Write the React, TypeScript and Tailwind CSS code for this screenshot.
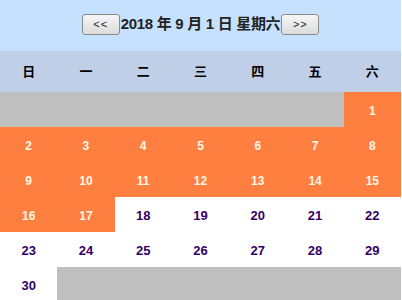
import React from 'react';

const weekdays = ['日', '一', '二', '三', '四', '五', '六'];

// September 2018 starts on Saturday; days up to the 17th are marked
const cells: (number | null)[] = [
  ...Array(6).fill(null),
  ...Array.from({ length: 30 }, (_, i) => i + 1),
  ...Array(6).fill(null),
];

const Btn: React.FC<{ label: string }> = ({ label }) => (
  <button className="h-[21px] w-[38px] rounded-[3px] border border-[#8a8a8a] bg-gradient-to-b from-[#f6f6f6] to-[#dcdcdc] text-[11px] leading-none text-[#222] tracking-[1px] [font-family:'Liberation_Sans',sans-serif]">
    {label}
  </button>
);

const App: React.FC = () => {
  return (
    <div className="w-[402px] h-[300px] overflow-hidden bg-white [font-family:'Liberation_Sans','Noto_Sans_CJK_SC',sans-serif]">
      <div className="w-[401px]">
        <div className="h-[51px] bg-[#c6e1fe] flex items-center justify-center pb-[2px]">
          <Btn label="<<" />
          <span className="text-[15px] font-bold text-[#222] tracking-[-0.3px] px-[1px]">2018 年 9 月 1 日 星期六</span>
          <Btn label=">>" />
        </div>
        <div className="h-[41px] bg-[#bfcfe8] grid grid-cols-7 items-center">
          {weekdays.map((d) => (
            <div key={d} className="text-center text-[13px] font-bold text-[#000]">
              {d}
            </div>
          ))}
        </div>
        <div className="grid grid-cols-7 auto-rows-[35px]">
          {cells.map((d, i) => {
            if (d === null) return <div key={i} className="bg-[#bfbfbf]" />;
            const past = d <= 17;
            return (
              <div
                key={i}
                className={
                  past
                    ? 'bg-[#ff7f41] flex items-center justify-center pt-[2px] text-[12px] font-bold text-[#fff6e6]'
                    : 'bg-white flex items-center justify-center pt-[2px] text-[13px] font-bold text-[#330066]'
                }
              >
                {d}
              </div>
            );
          })}
        </div>
      </div>
    </div>
  );
};

export default App;
